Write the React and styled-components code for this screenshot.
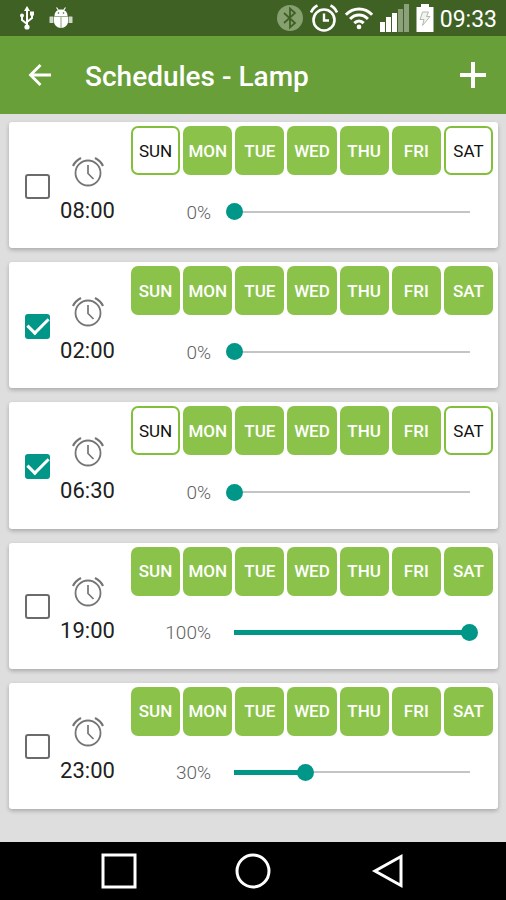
import React, { useState } from "react";
import styled, { createGlobalStyle, ThemeProvider } from "styled-components";

const theme = {
  statusBar: "#3f6124",
  toolbar: "#689f38",
  page: "#dedede",
  day: "#8bc34a",
  dayBorder: "#82c03c",
  accent: "#009688",
  icon: "#6b6b6b",
};

const GlobalStyle = createGlobalStyle`
  * {
    box-sizing: border-box;
  }

  body {
    margin: 0;
    font-family: Roboto, "Liberation Sans", sans-serif;
  }

  button {
    font: inherit;
    padding: 0;
    border: none;
    cursor: pointer;
  }

  svg {
    display: block;
    flex: none;
  }
`;

const Screen = styled.div`
  display: flex;
  flex-direction: column;
  min-height: 100vh;
  background: ${({ theme }) => theme.page};
`;

const StatusBar = styled.div`
  display: flex;
  align-items: center;
  justify-content: space-between;
  height: 36px;
  padding: 0 9px 0 19px;
  background: ${({ theme }) => theme.statusBar};
  color: white;
`;

const StatusGroup = styled.div`
  display: flex;
  align-items: center;
  gap: ${({ $gap }) => $gap}px;
`;

const StatusTime = styled.span`
  padding-top: 4px;
  font-size: 23px;
  line-height: 28px;
`;

const Toolbar = styled.header`
  display: flex;
  align-items: center;
  height: 78px;
  padding: 0 13px 0 20px;
  background: ${({ theme }) => theme.toolbar};
  color: white;
`;

const Title = styled.h1`
  flex: 1;
  margin: 0 0 0 25px;
  padding-top: 4px;
  font-size: 28px;
  line-height: 36px;
  font-weight: 500;
`;

const IconButton = styled.button`
  display: grid;
  place-items: center;
  width: 40px;
  height: 40px;
  background: none;
  color: inherit;
`;

const List = styled.main`
  flex: 1;
  display: flex;
  flex-direction: column;
  gap: 14px;
  padding: 8px 8px 33px 9px;
`;

const Card = styled.section`
  flex: 1;
  display: grid;
  grid-template-columns: 25px 75px 1fr;
  align-items: center;
  min-height: 126px;
  padding: 0 5px 0 16px;
  background: white;
  border-radius: 3px;
  box-shadow: 0 2px 4px rgba(0, 0, 0, 0.24);
`;

const Checkbox = styled.input`
  appearance: none;
  display: grid;
  place-content: center;
  width: 25px;
  height: 25px;
  margin: 2px 0 0;
  border: 2px solid ${({ theme }) => theme.icon};
  border-radius: 3px;
  cursor: pointer;

  &:checked {
    border-color: ${({ theme }) => theme.accent};
    background: ${({ theme }) => theme.accent};
  }

  &:checked::before {
    content: "";
    width: 9px;
    height: 18px;
    margin-bottom: 6px;
    border: solid white;
    border-width: 0 3px 3px 0;
    transform: rotate(45deg);
  }
`;

const TimeColumn = styled.label`
  display: flex;
  flex-direction: column;
  align-items: center;
  gap: 8px;
  padding-top: 11px;
  font-size: 22px;
  line-height: 30px;
  color: #212121;
`;

const Settings = styled.div`
  display: flex;
  flex-direction: column;
  align-self: stretch;
  padding: 4px 0 0 6px;
`;

const Days = styled.div`
  display: grid;
  grid-template-columns: repeat(7, 1fr);
  gap: 3px;
`;

const DayButton = styled.button`
  && {
    border: ${({ theme, $active }) =>
      $active ? "none" : `2px solid ${theme.dayBorder}`};
  }
  height: 49px;
  border-radius: 7px;
  background: ${({ theme, $active }) => ($active ? theme.day : "white")};
  color: ${({ $active }) => ($active ? "white" : "#111")};
  font-size: 17px;
  font-weight: ${({ $active }) => ($active ? 500 : 400)};
  line-height: 20px;
`;

const SliderRow = styled.div`
  flex: 1;
  display: flex;
  align-items: center;
  gap: 15px;
  padding-right: 15px;
`;

const Percent = styled.output`
  width: 80px;
  padding-top: 2px;
  text-align: right;
  font-size: 19px;
  font-weight: 300;
  line-height: 24px;
  color: #616161;
`;

const Slider = styled.input`
  appearance: none;
  flex: 1;
  min-width: 0;
  height: 17px;
  margin: 0;
  cursor: pointer;
  background:
    linear-gradient(${({ theme }) => `${theme.accent}, ${theme.accent}`}) 8px
      center / calc((100% - 16px) * var(--level)) 5px no-repeat,
    linear-gradient(#c4c4c4, #c4c4c4) center / calc(100% - 16px) 2px no-repeat;

  &::-webkit-slider-thumb {
    appearance: none;
    width: 17px;
    height: 17px;
    border-radius: 50%;
    background: ${({ theme }) => theme.accent};
  }
`;

const NavBar = styled.nav`
  display: flex;
  align-items: center;
  justify-content: space-between;
  height: 58px;
  padding: 0 20%;
  background: black;
`;

const NavButton = styled.button`
  background: none;
  color: white;
`;

const UsbIcon = () => (
  <svg width="16" height="26" viewBox="0 0 16 26" fill="none" stroke="white" strokeWidth="2">
    <path d="M8 5v17M8 19l-5-4v-4M8 17l5-4V9" />
    <path d="M8 1l3 5H5z" fill="white" stroke="none" />
    <circle cx="8" cy="22" r="2.6" fill="white" stroke="none" />
    <circle cx="3" cy="10.5" r="2" fill="white" stroke="none" />
    <path d="M11 6.5h4v4h-4z" fill="white" stroke="none" />
  </svg>
);

const AndroidIcon = () => (
  <svg width="24" height="22" viewBox="0 0 24 22" fill="white">
    <path d="M5.500 9C5.500 5 8 2.500 12 2.500S18.500 5 18.500 9z" />
    <path d="M7.500 0.500l2.500 3.500M16.500 0.500L14 4" stroke="white" strokeWidth="1.200" />
    <circle cx="9.500" cy="6" r="0.800" fill="#3f6124" />
    <circle cx="14.500" cy="6" r="0.800" fill="#3f6124" />
    <path d="M5 9.500h14v5c0 3.500-3 6.500-7 6.500s-7-3-7-6.500z" />
    <path d="M12 10v11" stroke="#8ba07b" />
    <rect x="0.500" y="9.500" width="4" height="6.500" rx="0.500" fill="#cfd8c8" />
    <rect x="19.500" y="9.500" width="4" height="6.500" rx="0.500" fill="#cfd8c8" />
  </svg>
);

const BluetoothIcon = () => (
  <svg width="28" height="28" viewBox="0 0 28 28">
    <circle cx="14" cy="14" r="13" fill="#86a06f" />
    <path
      d="M8 9l11 10-5 4.500v-19L19 9 8 19"
      fill="none"
      stroke="#3f6124"
      strokeWidth="1.800"
    />
  </svg>
);

const StatusAlarmIcon = () => (
  <svg width="28" height="28" viewBox="1 1 28 28" fill="none" stroke="white">
    <circle cx="15" cy="17" r="10.500" strokeWidth="2.600" />
    <path d="M15 10.500v7h5" strokeWidth="2.400" />
    <path d="M2 9.500C3.500 6 5 4 8.500 2.500M28 9.500C26.500 6 25 4 21.500 2.500" strokeWidth="2.600" />
  </svg>
);

const WifiIcon = () => (
  <svg width="30" height="26" viewBox="0 0 32 26" fill="none" stroke="white" strokeWidth="3.200">
    <path d="M2 9.500c8-8 20-8 28 0" />
    <path d="M6.500 14c5.500-5.500 13.500-5.500 19 0" />
    <path d="M11 18.500c3-3 7-3 10 0" />
    <circle cx="16" cy="22.500" r="2.500" fill="white" stroke="none" />
  </svg>
);

const SignalIcon = () => (
  <svg width="30" height="28" viewBox="0 0 30 28" fill="white">
    <rect x="0" y="18" width="5" height="10" />
    <rect x="6" y="13" width="5" height="15" />
    <rect x="12" y="9" width="5" height="19" />
    <rect x="18" y="5" width="5" height="23" opacity="0.400" />
    <rect x="24" y="0" width="5" height="28" opacity="0.400" />
  </svg>
);

const BatteryIcon = () => (
  <svg width="18" height="28" viewBox="0 0 18 28">
    <path d="M5 0h8v3h4.500v25H0.500V3H5z" fill="white" />
    <path
      d="M6.500 8h6l-2 4.500h3.500l-7.500 9 1.500-6H4z"
      fill="#f2f4f0"
      stroke="#b3b9ad"
      strokeWidth="1"
    />
  </svg>
);

const AlarmIcon = () => (
  <svg width="32" height="32" viewBox="0 0 32 32" fill="none" stroke="#757575">
    <circle cx="16" cy="17" r="12.500" strokeWidth="1.800" />
    <path d="M16 9v8.500l5.500 5.500" strokeWidth="1.700" />
    <path d="M1 10C2.500 6.500 5 4 9 2M31 10C29.500 6.500 27 4 23 2" strokeWidth="2.200" />
  </svg>
);

const BackIcon = () => (
  <svg width="24" height="24" viewBox="0 0 24 24" fill="none" stroke="currentColor" strokeWidth="2.800">
    <path d="M23 12H3M12.500 2L2.500 12l10 10" />
  </svg>
);

const AddIcon = () => (
  <svg width="28" height="28" viewBox="0 0 28 28" stroke="currentColor" strokeWidth="4">
    <path d="M14 1v26M1 14h26" />
  </svg>
);

const WEEK = ["SUN", "MON", "TUE", "WED", "THU", "FRI", "SAT"];
const WORKDAYS = ["MON", "TUE", "WED", "THU", "FRI"];

const initialSchedules = [
  { time: "08:00", enabled: false, days: WORKDAYS, level: 0 },
  { time: "02:00", enabled: true, days: WEEK, level: 0 },
  { time: "06:30", enabled: true, days: WORKDAYS, level: 0 },
  { time: "19:00", enabled: false, days: WEEK, level: 100 },
  { time: "23:00", enabled: false, days: WEEK, level: 30 },
];

const ScheduleCard = ({ schedule, onChange }) => {
  const { time, enabled, days, level } = schedule;
  const id = `schedule-${time.replace(":", "")}`;

  const toggleDay = (day) =>
    onChange({
      days: days.includes(day) ? days.filter((d) => d !== day) : [...days, day],
    });

  return (
    <Card>
      <Checkbox
        id={id}
        type="checkbox"
        checked={enabled}
        onChange={(e) => onChange({ enabled: e.target.checked })}
      />
      <TimeColumn htmlFor={id}>
        <AlarmIcon />
        {time}
      </TimeColumn>
      <Settings>
        <Days>
          {WEEK.map((day) => (
            <DayButton
              key={day}
              type="button"
              $active={days.includes(day)}
              aria-pressed={days.includes(day)}
              onClick={() => toggleDay(day)}
            >
              {day}
            </DayButton>
          ))}
        </Days>
        <SliderRow>
          <Percent htmlFor={`${id}-level`}>{level}%</Percent>
          <Slider
            id={`${id}-level`}
            type="range"
            min="0"
            max="100"
            value={level}
            aria-label={`Level at ${time}`}
            style={{ "--level": level / 100 }}
            onChange={(e) => onChange({ level: Number(e.target.value) })}
          />
        </SliderRow>
      </Settings>
    </Card>
  );
};

const App = () => {
  const [schedules, setSchedules] = useState(initialSchedules);

  const updateSchedule = (time, changes) =>
    setSchedules((items) =>
      items.map((item) => (item.time === time ? { ...item, ...changes } : item))
    );

  return (
    <ThemeProvider theme={theme}>
      <GlobalStyle />
      <Screen>
        <StatusBar>
          <StatusGroup $gap={14}>
            <UsbIcon />
            <AndroidIcon />
          </StatusGroup>
          <StatusGroup $gap={6}>
            <BluetoothIcon />
            <StatusAlarmIcon />
            <WifiIcon />
            <SignalIcon />
            <BatteryIcon />
            <StatusTime>09:33</StatusTime>
          </StatusGroup>
        </StatusBar>

        <Toolbar>
          <IconButton type="button" aria-label="Back">
            <BackIcon />
          </IconButton>
          <Title>Schedules - Lamp</Title>
          <IconButton type="button" aria-label="Add schedule">
            <AddIcon />
          </IconButton>
        </Toolbar>

        <List>
          {schedules.map((schedule) => (
            <ScheduleCard
              key={schedule.time}
              schedule={schedule}
              onChange={(changes) => updateSchedule(schedule.time, changes)}
            />
          ))}
        </List>

        <NavBar>
          <NavButton type="button" aria-label="Recent apps">
            <svg width="36" height="36" viewBox="0 0 36 36" fill="none" stroke="currentColor" strokeWidth="3">
              <rect x="2" y="2" width="32" height="32" />
            </svg>
          </NavButton>
          <NavButton type="button" aria-label="Home">
            <svg width="36" height="36" viewBox="0 0 36 36" fill="none" stroke="currentColor" strokeWidth="3">
              <circle cx="18" cy="18" r="16" />
            </svg>
          </NavButton>
          <NavButton type="button" aria-label="Go back">
            <svg width="36" height="36" viewBox="0 0 36 36" fill="none" stroke="currentColor" strokeWidth="3">
              <path d="M32 3.500v29L6 18z" />
            </svg>
          </NavButton>
        </NavBar>
      </Screen>
    </ThemeProvider>
  );
};

export default App;
